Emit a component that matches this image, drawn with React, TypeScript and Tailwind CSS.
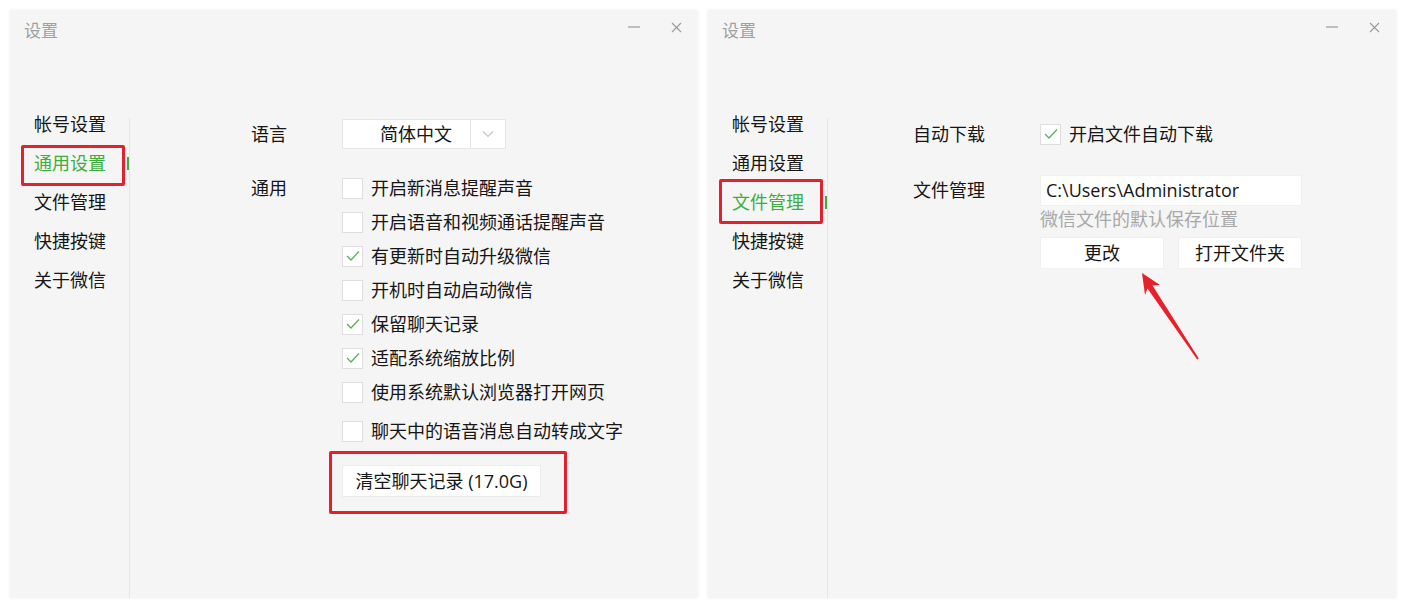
const navItems = ["帐号设置", "通用设置", "文件管理", "快捷按键", "关于微信"];

const generalOptions = [
  { label: "开启新消息提醒声音", checked: false },
  { label: "开启语音和视频通话提醒声音", checked: false },
  { label: "有更新时自动升级微信", checked: true },
  { label: "开机时自动启动微信", checked: false },
  { label: "保留聊天记录", checked: true },
  { label: "适配系统缩放比例", checked: true },
  { label: "使用系统默认浏览器打开网页", checked: false },
];

function CheckBox({ checked }: { checked: boolean }) {
  return (
    <div className="w-[21px] h-[21px] shrink-0 bg-white border border-[#dedede] flex items-center justify-center">
      {checked && (
        <svg width="16" height="16" viewBox="0 0 16 16">
          <polyline points="2,8 6,12 14,3.5" fill="none" stroke="#55b455" strokeWidth="1.3" />
        </svg>
      )}
    </div>
  );
}

function Window({ active, children }: { active: string; children: React.ReactNode }) {
  return (
    <div className="relative w-[688px] h-[588px] bg-[#f5f5f5] shadow-[0_0_3px_rgba(0,0,0,0.08)] flex flex-col">
      {/* title bar */}
      <div className="h-[44px] flex items-start pl-[14px] pr-[16px]">
        <span className="mt-[10px] leading-[22px] text-[17px] text-[#a0a0a0]">设置</span>
        <div className="ml-auto mt-[10px] h-[14px] flex items-center gap-[31px]">
          <svg width="12" height="12" viewBox="0 0 12 12">
            <line x1="0" y1="6" x2="12" y2="6" stroke="#9a9a9a" strokeWidth="1.2" />
          </svg>
          <svg width="11" height="11" viewBox="0 0 11 11">
            <line x1="1" y1="1" x2="10" y2="10" stroke="#9a9a9a" strokeWidth="1.1" />
            <line x1="10" y1="1" x2="1" y2="10" stroke="#9a9a9a" strokeWidth="1.1" />
          </svg>
        </div>
      </div>

      <div className="mt-[51px] flex flex-1">
        {/* sidebar */}
        <div className="w-[119px] flex flex-col">
          {navItems.map((item) => (
            <div key={item} className="h-[39px] flex items-center justify-between">
              <span className={`pl-[24px] text-[18px] ${item === active ? "text-[#3dae3d]" : "text-[#161616]"}`}>{item}</span>
              {item === active && <div className="w-[2px] h-[13px] bg-[#3dae3d]" />}
            </div>
          ))}
        </div>
        <div className="w-px mt-[13px] bg-[#e6e6e6]" />
        {children}
      </div>
    </div>
  );
}

export default function App() {
  return (
    <div className="w-[1406px] h-[608px] bg-white p-[10px] flex gap-[10px] font-['Open_Sans','Noto_Sans_CJK_SC',sans-serif] text-[#161616]">
      {/* general settings */}
      <Window active="通用设置">
        <div className="flex-1 pl-[121px] pt-[14px] text-[18px]">
          <div className="flex items-center h-[30px]">
            <span className="w-[91px]">语言</span>
            <div className="w-[164px] h-[30px] bg-white border border-[#e6e6e6] flex">
              <div className="w-[127px] pl-[37px] flex items-center">简体中文</div>
              <div className="w-px bg-[#e6e6e6]" />
              <div className="flex-1 flex items-center justify-center">
                <svg width="12" height="8" viewBox="0 0 12 8">
                  <polyline points="1,1.5 6,6.5 11,1.5" fill="none" stroke="#c4c4c4" strokeWidth="1.1" />
                </svg>
              </div>
            </div>
          </div>

          <div className="flex mt-[22px]">
            <span className="w-[91px] h-[34px] leading-[34px]">通用</span>
            <div className="flex flex-col">
              {generalOptions.map((opt) => (
                <div key={opt.label} className="h-[34px] flex items-center gap-[8px]">
                  <CheckBox checked={opt.checked} />
                  <span>{opt.label}</span>
                </div>
              ))}
              <div className="h-[34px] mt-[5px] flex items-center gap-[8px]">
                <CheckBox checked={false} />
                <span>聊天中的语音消息自动转成文字</span>
              </div>
              <button className="mt-[17px] w-[199px] h-[32px] bg-white border border-[#ececec] text-[18px] text-center">
                清空聊天记录 (17.0G)
              </button>
            </div>
          </div>
        </div>

        {/* annotations */}
        <div className="absolute left-[11px] top-[135px] w-[104px] h-[41px] border-[3px] border-[#e3202c] rounded-[2px]" />
        <div className="absolute left-[319px] top-[441px] w-[238px] h-[63px] border-[3px] border-[#e3202c] rounded-[2px]" />
      </Window>

      {/* file settings */}
      <Window active="文件管理">
        <div className="flex-1 pl-[85px] pt-[12px] text-[18px]">
          <div className="flex items-center h-[34px]">
            <span className="w-[127px]">自动下载</span>
            <div className="flex items-center gap-[8px]">
              <CheckBox checked={true} />
              <span>开启文件自动下载</span>
            </div>
          </div>

          <div className="flex mt-[24px]">
            <span className="w-[127px] h-[31px] leading-[31px]">文件管理</span>
            <div className="flex flex-col">
              <div className="w-[262px] h-[31px] bg-white border border-[#f0f0f0] pl-[5px] flex items-center">
                C:\Users\Administrator
              </div>
              <div className="h-[26px] leading-[26px] text-[#a8a8a8]">微信文件的默认保存位置</div>
              <div className="mt-[5px] flex gap-[14px]">
                <button className="w-[124px] h-[32px] bg-white border border-[#f0f0f0] text-center">更改</button>
                <button className="w-[124px] h-[32px] bg-white border border-[#f0f0f0] text-center">打开文件夹</button>
              </div>
            </div>
          </div>
        </div>

        <div className="absolute left-[11px] top-[169px] w-[104px] h-[45px] border-[3px] border-[#e3202c] rounded-[2px]" />
        <svg className="absolute left-[420px] top-[255px]" width="90" height="110" viewBox="0 0 90 110">
          <polygon
            points="14,8 32,20 24.5,20.4 70.8,93.5 69.2,94.5 19.5,23.6 17,30"
            fill="#e62129"
          />
        </svg>
      </Window>
    </div>
  );
}
